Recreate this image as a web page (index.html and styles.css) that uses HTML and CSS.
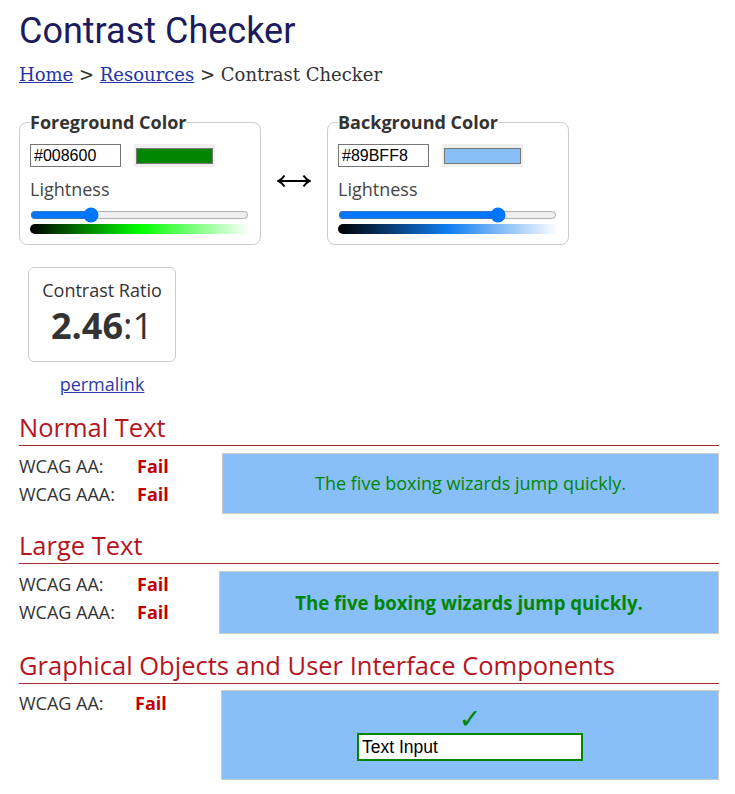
FILE: index.html
```html
<!DOCTYPE html>
<html lang="en">
<head>
<meta charset="utf-8">
<title>Contrast Checker</title>
<link rel="stylesheet" href="styles.css">
</head>
<body>
<main class="page">
  <h1 class="title">Contrast Checker</h1>
  <nav class="crumbs"><a href="#">Home</a> &gt; <a href="#">Resources</a> &gt; Contrast Checker</nav>

  <div class="pickers">
    <fieldset class="picker">
      <legend>Foreground Color</legend>
      <div class="pick-row">
        <input class="hex" type="text" value="#008600">
        <span class="swatch"><span class="swatch-fill swatch-fg"></span></span>
      </div>
      <label class="light-label">Lightness</label>
      <input class="slider" type="range" min="0" max="100" value="26">
      <div class="grad grad-fg"></div>
    </fieldset>

    <div class="swap">
      <svg width="34" height="14" viewBox="0 0 34 14" aria-hidden="true">
        <path d="M1.5 7 H32.5" stroke="#000" stroke-width="2" fill="none"/>
        <path d="M7.5 1.5 Q5 5.5 1.5 7 Q5 8.5 7.5 12.5" stroke="#000" stroke-width="2" fill="none"/>
        <path d="M26.5 1.5 Q29 5.5 32.5 7 Q29 8.5 26.5 12.5" stroke="#000" stroke-width="2" fill="none"/>
      </svg>
    </div>

    <fieldset class="picker">
      <legend>Background Color</legend>
      <div class="pick-row">
        <input class="hex" type="text" value="#89BFF8">
        <span class="swatch"><span class="swatch-fill swatch-bg"></span></span>
      </div>
      <label class="light-label">Lightness</label>
      <input class="slider" type="range" min="0" max="100" value="75">
      <div class="grad grad-bg"></div>
    </fieldset>
  </div>

  <div class="ratio-wrap">
    <div class="ratio-box">
      <div class="ratio-label">Contrast Ratio</div>
      <div class="ratio-val"><b>2.46</b>:1</div>
    </div>
    <a class="permalink" href="#">permalink</a>
  </div>

  <section class="result">
    <h2 class="res-title">Normal Text</h2>
    <div class="res-grid res-normal">
      <div class="res-list">
        <div class="res-row"><span>WCAG AA:</span><span class="fail">Fail</span></div>
        <div class="res-row"><span>WCAG AAA:</span><span class="fail">Fail</span></div>
      </div>
      <div class="sample">The five boxing wizards jump quickly.</div>
    </div>
  </section>

  <section class="result">
    <h2 class="res-title">Large Text</h2>
    <div class="res-grid res-large">
      <div class="res-list">
        <div class="res-row"><span>WCAG AA:</span><span class="fail">Fail</span></div>
        <div class="res-row"><span>WCAG AAA:</span><span class="fail">Fail</span></div>
      </div>
      <div class="sample sample-large">The five boxing wizards jump quickly.</div>
    </div>
  </section>

  <section class="result">
    <h2 class="res-title">Graphical Objects and User Interface Components</h2>
    <div class="res-grid res-ui">
      <div class="res-list">
        <div class="res-row res-row-ui"><span>WCAG AA:</span><span class="fail">Fail</span></div>
      </div>
      <div class="sample ui-sample">
        <span class="check">✓</span>
        <input class="ui-input" type="text" value="Text Input">
      </div>
    </div>
  </section>
</main>
</body>
</html>
```

FILE: styles.css
```css
html, body {
  margin: 0;
  padding: 0;
  background: #fff;
}

body {
  font-family: "Open Sans", "DejaVu Sans", sans-serif;
  font-size: 18px;
  color: #333;
}

.page {
  width: 700px;
  padding-left: 19px;
}

.title {
  font-family: Roboto, "Liberation Sans", sans-serif;
  font-weight: 400;
  font-size: 36px;
  line-height: 42px;
  margin: 10px 0 0;
  color: #1b1b5e;
}

.crumbs {
  font-family: "DejaVu Serif", "Liberation Serif", serif;
  font-size: 18px;
  line-height: 20px;
  margin-top: 13px;
  color: #333;
}

.crumbs a {
  color: #2233aa;
  text-decoration: underline;
}

.pickers {
  display: flex;
  align-items: flex-start;
  margin-top: 25px;
}

.picker {
  width: 242px;
  min-width: 0;
  box-sizing: border-box;
  margin: 0;
  border: 1px solid #ccc;
  border-radius: 8px;
  padding: 0 10px 10px;
}

.picker legend {
  font-weight: 700;
  font-size: 18px;
  line-height: 24px;
  padding: 0;
  color: #333;
}

.pick-row {
  display: flex;
  gap: 13px;
  margin-top: 10px;
}

.hex {
  width: 91px;
  height: 23px;
  box-sizing: border-box;
  margin: 0;
  padding: 0 3px;
  border: 1px solid #767676;
  border-radius: 0;
  font-family: "Liberation Sans", Arial, sans-serif;
  font-size: 16px;
  color: #000;
  background: #fff;
}

.swatch {
  display: flex;
  width: 81px;
  height: 23px;
  box-sizing: border-box;
  padding: 4px 2px 3px;
  background: #efefef;
}

.swatch-fill {
  flex: 1;
  border: 1px solid #777;
}

.swatch-fg { background: #008600; }
.swatch-bg { background: #89bff8; }

.light-label {
  display: block;
  margin-top: 10px;
  line-height: 24px;
  color: #444;
}

.slider {
  display: block;
  width: 219px;
  height: 16px;
  margin: 6px 0 0;
  padding: 0;
}

.grad {
  height: 10px;
  margin-top: 1px;
  border-radius: 5px 0 0 5px;
}

.grad-fg {
  background: linear-gradient(to right, #000 0%, #00ff00 50%, #fff 100%);
}

.grad-bg {
  background: linear-gradient(to right, #000 0%, #0f7ef1 50%, #fff 100%);
}

.swap {
  width: 66px;
  display: flex;
  justify-content: center;
  margin-top: 64px;
}

.swap svg {
  display: block;
}

.ratio-wrap {
  display: flex;
  flex-direction: column;
  align-items: center;
  width: 148px;
  margin: 22px 0 0 9px;
}

.ratio-box {
  width: 148px;
  box-sizing: border-box;
  border: 1px solid #ccc;
  border-radius: 6px;
  padding: 10px 0 11px;
  text-align: center;
}

.ratio-label {
  line-height: 24px;
}

.ratio-val {
  font-size: 36px;
  line-height: 48px;
  color: #333;
}

.ratio-val b {
  font-weight: 700;
}

.permalink {
  margin-top: 10px;
  line-height: 24px;
  color: #2a3ba8;
  text-decoration: underline;
}

.result {
  margin-top: 14px;
}

.res-title {
  margin: 0;
  font-size: 25.5px;
  font-weight: 400;
  line-height: 35px;
  color: #b5161e;
  border-bottom: 1px solid #a52a2e;
}

.res-grid {
  display: grid;
  margin-top: 7px;
}

.res-normal { grid-template-columns: 203px 1fr; }
.res-large { grid-template-columns: 200px 1fr; }
.res-ui { grid-template-columns: 202px 1fr; margin-top: 6px; }

.res-list {
  display: flex;
  flex-direction: column;
  gap: 2px;
}

.res-row {
  display: grid;
  grid-template-columns: 118px auto;
  line-height: 26px;
}

.res-row-ui {
  grid-template-columns: 116px auto;
}

.fail {
  font-weight: 700;
  color: #c00000;
}

.sample {
  background: #89bff8;
  border: 1px solid #ccc;
  color: #008600;
  text-align: center;
  padding: 17px 10px;
  line-height: 25px;
}

.sample-large {
  font-weight: 700;
  font-size: 18.67px;
  line-height: 27px;
}

.ui-sample {
  display: flex;
  flex-direction: column;
  align-items: center;
  padding: 13px 0 18px;
}

.check {
  font-family: "DejaVu Sans", sans-serif;
  font-size: 27px;
  line-height: 29px;
  color: #008600;
}

.ui-input {
  width: 226px;
  height: 28px;
  box-sizing: border-box;
  margin: 0;
  padding: 0 3px;
  border: 2px solid #008600;
  border-radius: 0;
  background: #fff;
  color: #000;
  font-family: "Liberation Sans", Arial, sans-serif;
  font-size: 17.5px;
}
```
